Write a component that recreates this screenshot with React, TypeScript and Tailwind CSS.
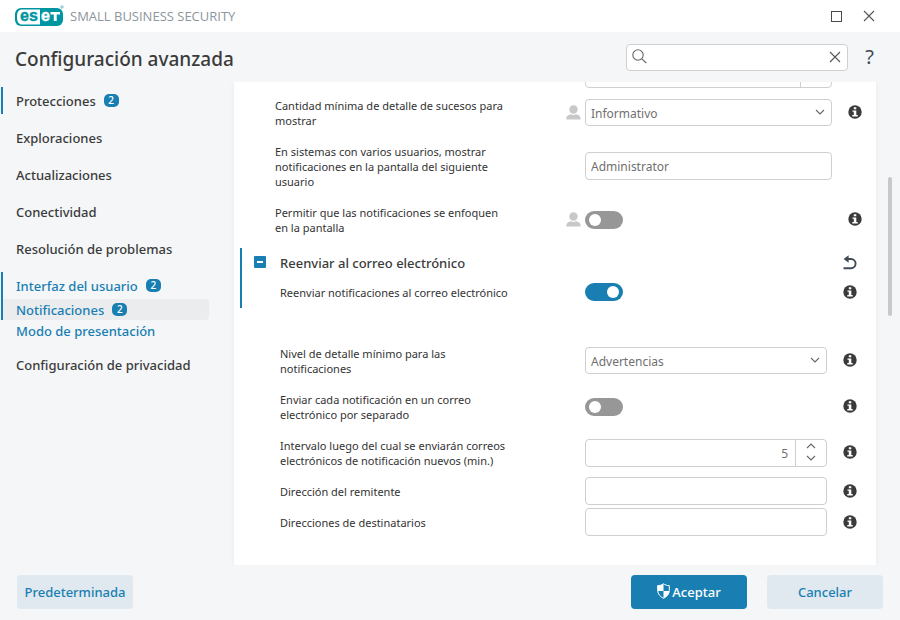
import React, { useState } from 'react';

type NavItem = { label: string; badge?: number; children?: { label: string; badge?: number; current?: boolean }[] };

const nav: NavItem[] = [
  { label: 'Protecciones', badge: 2 },
  { label: 'Exploraciones' },
  { label: 'Actualizaciones' },
  { label: 'Conectividad' },
  { label: 'Resolución de problemas' },
  {
    label: 'Interfaz del usuario',
    badge: 2,
    children: [
      { label: 'Notificaciones', badge: 2, current: true },
      { label: 'Modo de presentación' },
    ],
  },
  { label: 'Configuración de privacidad' },
];

const EsetLogo = () => (
  <svg width="50" height="22" viewBox="0 0 50 22" role="img" aria-label="ESET">
    <rect x="0" y="3" width="48" height="18" rx="6" fill="#0096a1" />
    <path d="M7 4.500h18v15H7c-3 0-5-2-5-7.500s2-7.500 5-7.500z" fill="#fff" />
    <text x="5" y="16" fontFamily="'Liberation Sans', sans-serif" fontWeight="700" fontSize="16" fill="#0096a1" stroke="#0096a1" strokeWidth="0.400">es</text>
    <text x="26" y="16" fontFamily="'Liberation Sans', sans-serif" fontWeight="700" fontSize="16" fill="#fff" stroke="#fff" strokeWidth="0.400">e</text>
    <path d="M35.500 7h9.500v2.600h-3.300V16h-2.900V9.600h-3.300z" fill="#fff" />
    <circle cx="47" cy="2" r="1.200" fill="none" stroke="#5fbcc3" strokeWidth="0.900" />
  </svg>
);

const InfoIcon = () => (
  <svg width="14" height="14" viewBox="0 0 14 14" aria-hidden="true">
    <circle cx="7" cy="7" r="6.700" fill="#3a3a3a" />
    <path d="M5.800 2.300h2.500v2H5.800zM4.500 5.400h3.800v4.700h1.400v1.400H4.300v-1.400h1.500V6.800H4.500z" fill="#fff" />
  </svg>
);

const UserIcon = () => (
  <svg width="15" height="15" viewBox="0 0 15 15" aria-hidden="true">
    <circle cx="7.500" cy="4.500" r="4.200" fill="#c8c8c8" />
    <path d="M0.300 14.500c0-3.500 2-4.800 4.700-5.200 1.500 1 3.500 1 5 0 2.700.4 4.700 1.700 4.700 5.200z" fill="#c8c8c8" />
  </svg>
);

const UndoIcon = () => (
  <svg width="14" height="15" viewBox="0 0 14 15" aria-hidden="true">
    <path d="M3 4h5a4.600 4.600 0 0 1 0 9.200H0.500" fill="none" stroke="#404b55" strokeWidth="1.900" />
    <path d="M5.600 0.200v7.600L0.600 4z" fill="#404b55" />
  </svg>
);

const Chevron = ({ up = false }: { up?: boolean }) => (
  <svg width="10" height="6" viewBox="0 0 10 6" fill="none" stroke="#666" strokeWidth="1.100" aria-hidden="true">
    <path d={up ? 'M1 5l4-4 4 4' : 'M1 1l4 4 4-4'} />
  </svg>
);

const CloseIcon = () => (
  <svg width="12" height="12" viewBox="0 0 12 12" stroke="#555" strokeWidth="1.100" aria-hidden="true">
    <path d="M1 1l10 10M11 1L1 11" />
  </svg>
);

const Badge = ({ value }: { value: number }) => (
  <span className="mb-0.5 flex h-[13px] w-[15px] items-center justify-center rounded-[5px] bg-[#197fb2] text-[10px] leading-[13px] text-white">
    {value}
  </span>
);

const Toggle = ({ id, defaultChecked }: { id: string; defaultChecked?: boolean }) => (
  <input
    id={id}
    type="checkbox"
    role="switch"
    defaultChecked={defaultChecked}
    className="flex h-[18px] w-[38px] appearance-none items-center rounded-full bg-[#979797] px-1 before:size-3 before:rounded-full before:bg-white checked:justify-end checked:bg-[#197fb2]"
  />
);

const Select = ({ id, options }: { id: string; options: string[] }) => (
  <div className="relative">
    <select id={id} className="block h-[27px] w-full appearance-none rounded border border-[#cfcfcf] bg-white px-[5px] pt-0.5 text-[12px] text-[#707070]">
      {options.map((option) => (
        <option key={option}>{option}</option>
      ))}
    </select>
    <span className="pointer-events-none absolute top-[10px] right-[7px]">
      <Chevron />
    </span>
  </div>
);

const TextField = ({ id, value }: { id: string; value?: string }) => (
  <input
    id={id}
    type="text"
    defaultValue={value}
    className="block h-7 w-full rounded border border-[#cfcfcf] bg-white px-[5px] text-[12px] text-[#707070]"
  />
);

const Spinner = ({ id, initial }: { id: string; initial: number }) => {
  const [value, setValue] = useState(initial);
  return (
    <div className="flex h-7 w-full shrink-0 rounded border border-[#cfcfcf] bg-white">
      <input
        id={id}
        type="text"
        inputMode="numeric"
        aria-label="Valor"
        value={value}
        onChange={(e) => setValue(Number(e.target.value) || 0)}
        className="min-w-0 flex-1 bg-transparent px-[7px] pt-0.5 text-right text-[12px] text-[#707070]"
      />
      <div className="flex w-[31px] flex-col border-l border-[#cfcfcf] pb-0.5">
        <button type="button" aria-label="Aumentar" onClick={() => setValue(value + 1)} className="flex flex-1 items-center justify-center">
          <Chevron up />
        </button>
        <button type="button" aria-label="Disminuir" onClick={() => setValue(value - 1)} className="flex flex-1 items-center justify-center">
          <Chevron />
        </button>
      </div>
    </div>
  );
};

type RowProps = {
  id: string;
  text: string;
  nested?: boolean;
  user?: boolean;
  info?: boolean;
  children: React.ReactNode;
};

const Row = ({ id, text, nested, user, info = true, children }: RowProps) => (
  <div className={`flex min-h-[31px] items-center ${nested ? 'pr-[19px] pl-[38px]' : 'pr-[14px] pl-[41px]'}`}>
    <label htmlFor={id} className={`shrink-0 py-2 pr-14 text-[11px] leading-[15px] text-[#333] ${nested ? 'w-[286px]' : 'w-[291px]'}`}>
      {text}
    </label>
    <span className="w-[19px] shrink-0 pb-px">{user && <UserIcon />}</span>
    <div className="min-w-0 flex-1 pb-px">{children}</div>
    <div className="flex w-[30px] shrink-0 justify-end pb-0.5">
      {info && (
        <button type="button" aria-label="Información">
          <InfoIcon />
        </button>
      )}
    </div>
  </div>
);

const Sidebar = () => (
  <nav className="w-[234px] shrink-0 pt-[5px] pl-px text-[13px] font-medium text-[#3b3b3b]">
    <ul className="flex flex-col gap-[10px]">
      {nav.map((item) => (
        <li key={item.label} className="relative">
          {item.badge && (
            <span className={`absolute top-0 left-0 w-0.5 bg-[#197fb2] ${item.children ? 'h-12' : 'h-[27px]'}`} />
          )}
          <a href="#" className={`flex h-[27px] items-center gap-2 pt-0.5 pl-[15px] ${item.children ? 'text-[#197fb2]' : ''}`}>
            {item.label}
            {item.badge && <Badge value={item.badge} />}
          </a>
          {item.children && (
            <ul className="pl-0.5 text-[#197fb2]">
              {item.children.map((child) => (
                <li key={child.label}>
                  <a
                    href="#"
                    aria-current={child.current ? 'page' : undefined}
                    className={`mr-[25px] flex h-[21px] items-center gap-2 rounded-r pt-0.5 pl-[13px] ${child.current ? 'bg-[#eaecee]' : ''}`}
                  >
                    {child.label}
                    {child.badge && <Badge value={child.badge} />}
                  </a>
                </li>
              ))}
            </ul>
          )}
        </li>
      ))}
    </ul>
  </nav>
);

const Settings = () => (
  <main className="min-w-0 flex-1 bg-white pb-[27px] shadow-[0_0_6px_rgba(0,0,0,0.05)]">
    <div className="h-2">
      <div className="flex h-[6px] items-end overflow-hidden pr-[44px] pl-[351px]">
        <Spinner id="duration" initial={10} />
      </div>
    </div>
    <Row id="verbosity" text="Cantidad mínima de detalle de sucesos para mostrar" user>
      <Select id="verbosity" options={['Informativo', 'Advertencias', 'Errores']} />
    </Row>
    <Row
      id="target-user"
      text="En sistemas con varios usuarios, mostrar notificaciones en la pantalla del siguiente usuario"
      info={false}
    >
      <TextField id="target-user" value="Administrator" />
    </Row>
    <Row id="focus" text="Permitir que las notificaciones se enfoquen en la pantalla" user>
      <Toggle id="focus" />
    </Row>

    <section className="mt-[5px] ml-[6px]">
      <div className="border-l-2 border-[#197fb2]">
        <div className="flex h-[29px] items-center pr-[19px] pl-[12px]">
          <button type="button" aria-label="Contraer" className="mb-0.5 flex size-3 items-center justify-center rounded-[1px] bg-[#197fb2]">
            <span className="h-0.5 w-[6px] bg-white" />
          </button>
          <h2 className="flex-1 pt-0.5 pl-[14px] text-[13px] font-medium text-[#3b3b3b]">Reenviar al correo electrónico</h2>
          <button type="button" aria-label="Restablecer">
            <UndoIcon />
          </button>
        </div>
        <Row id="forward" text="Reenviar notificaciones al correo electrónico" nested>
          <Toggle id="forward" defaultChecked />
        </Row>
      </div>
      <div className="mt-[30px] pl-0.5">
        <Row id="level" text="Nivel de detalle mínimo para las notificaciones" nested>
          <Select id="level" options={['Advertencias', 'Informativo', 'Errores']} />
        </Row>
        <Row id="separate" text="Enviar cada notificación en un correo electrónico por separado" nested>
          <Toggle id="separate" />
        </Row>
        <Row id="interval" text="Intervalo luego del cual se enviarán correos electrónicos de notificación nuevos (min.)" nested>
          <Spinner id="interval" initial={5} />
        </Row>
        <Row id="sender" text="Dirección del remitente" nested>
          <TextField id="sender" />
        </Row>
        <Row id="recipients" text="Direcciones de destinatarios" nested>
          <TextField id="recipients" />
        </Row>
      </div>
    </section>
  </main>
);

export default function App() {
  return (
    <div className="flex min-h-screen flex-col bg-[#f4f6f8] font-['Noto_Sans',sans-serif]">
      <header className="flex h-8 items-center bg-white pr-[25px] pl-[15px]">
        <div className="flex flex-1 items-center gap-[5px]">
          <EsetLogo />
          <span className="pt-0.5 font-['Open_Sans',sans-serif] text-[13px] text-[#8c969b]">SMALL BUSINESS SECURITY</span>
        </div>
        <div className="flex items-center gap-[21px]">
          <button type="button" aria-label="Maximizar" className="size-[11px] border border-[#4a4a4a]" />
          <button type="button" aria-label="Cerrar">
            <CloseIcon />
          </button>
        </div>
      </header>

      <div className="flex h-[50px] items-center pr-[24px] pl-[15px]">
        <h1 className="flex-1 pt-1 text-[19px] font-medium text-[#3b3b3b]">Configuración avanzada</h1>
        <div className="flex h-[27px] w-[222px] items-center rounded border border-[#cfcfcf] bg-white pr-[6px] pb-px pl-[5px]">
          <svg width="15" height="15" viewBox="0 0 15 15" fill="none" stroke="#666" strokeWidth="1.100" aria-hidden="true">
            <circle cx="6" cy="6" r="5.200" />
            <path d="M9.800 9.800l4.500 4.200" />
          </svg>
          <input type="search" aria-label="Buscar" className="min-w-0 flex-1 bg-transparent px-1 text-[13px]" />
          <button type="button" aria-label="Borrar">
            <CloseIcon />
          </button>
        </div>
        <button type="button" aria-label="Ayuda" className="ml-[15px] w-[13px] text-[20px] leading-[20px] text-[#404b55]">
          ?
        </button>
      </div>

      <div className="flex flex-1 overflow-hidden">
        <Sidebar />
        <Settings />
        <div className="w-6 shrink-0 pt-[95px] pl-3">
          <div className="h-[139px] w-1 rounded-full bg-[#c6c8ca]" />
        </div>
      </div>

      <footer className="flex h-[55px] items-center pr-[17px] pb-px pl-[17px] text-[13px] font-medium">
        <button type="button" className="h-[34px] w-[116px] rounded bg-[#dfe9ef] pt-px text-[#197fb2]">Predeterminada</button>
        <div className="ml-auto flex gap-5">
          <button type="button" className="flex h-[34px] w-[116px] items-center justify-center gap-0.5 rounded bg-[#197fb2] pt-px text-white">
            <svg width="13" height="16" viewBox="0 0 13 16" className="mb-[3px]" aria-hidden="true">
              <path d="M6.500 0.700C5 2 3 2.600 0.700 2.600V7.500c0 3.800 2.800 6.300 5.800 7.800 3-1.500 5.800-4 5.800-7.800V2.600C10 2.600 8 2 6.500 0.700z" fill="#197fb2" stroke="#fff" strokeWidth="1" />
              <path d="M6.500 0.700C5 2 3 2.600 0.700 2.600V8h5.800zM6.500 8h5.800c-.2 3.600-2.900 5.900-5.800 7.300z" fill="#fff" />
            </svg>
            Aceptar
          </button>
          <button type="button" className="h-[34px] w-[116px] rounded bg-[#dfe9ef] pt-px text-[#197fb2]">Cancelar</button>
        </div>
      </footer>
    </div>
  );
}
